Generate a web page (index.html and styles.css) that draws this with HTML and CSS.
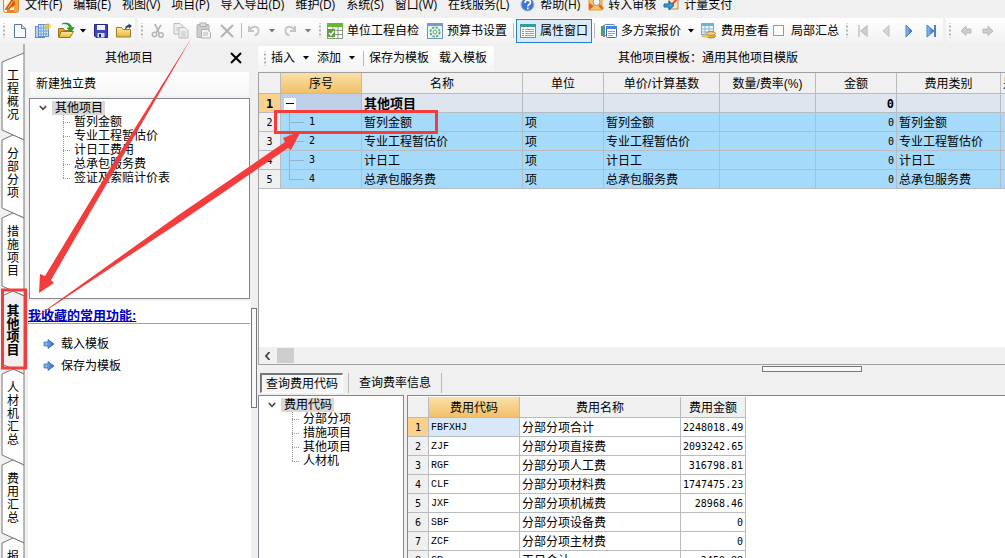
FILE: index.html
```html
<!DOCTYPE html>
<html lang="zh-CN">
<head>
<meta charset="utf-8">
<title>其他项目</title>
<link rel="stylesheet" href="styles.css">
</head>
<body>
<svg class="defs" aria-hidden="true">
  <defs>
    <linearGradient id="gold" x1="0" y1="0" x2="0" y2="1"><stop offset="0" stop-color="#fff0a0"/><stop offset="1" stop-color="#e8b23c"/></linearGradient>
    <linearGradient id="blue" x1="0" y1="0" x2="1" y2="0"><stop offset="0" stop-color="#9cc4f5"/><stop offset="1" stop-color="#2463c8"/></linearGradient>
    <symbol id="arrow-item" viewBox="0 0 12 12"><path d="M1 4h4V1.500L11 6 5 10.500V8H1z" fill="url(#blue)" stroke="#3a68ac" stroke-width=".8"/></symbol>
    <symbol id="caret" viewBox="0 0 6 4"><path d="M0 0h6L3 3.500z" fill="currentColor"/></symbol>
    <symbol id="chevron" viewBox="0 0 8 6"><path d="M.8 1L4 4.300 7.200 1" fill="none" stroke="#444" stroke-width="1.600"/></symbol>
  </defs>
</svg>
<div class="app">
  <nav class="menubar">
    <svg class="icon" viewBox="0 0 16 16"><rect x=".5" y="-2" width="15" height="14.500" rx="2" fill="#fff3d8" stroke="#d98a26"/><path d="M11-1h4v13h-4z" fill="#f7a43a"/><path d="M3 9L9 0l2 2-5 7zM4 11h7M9 7l3-4" stroke="#cf5a14" stroke-width="1.500" fill="#f4b25c"/></svg>
    <button>文件(F)</button><button>编辑(E)</button><button>视图(V)</button><button>项目(P)</button><button>导入导出(D)</button><button>维护(D)</button><button>系统(S)</button><button>窗口(W)</button><button>在线服务(L)</button>
    <button class="with-icon"><svg class="icon" viewBox="0 0 16 16"><circle cx="7.500" cy="5.500" r="6.500" fill="#3d78d8" stroke="#a9b6cc"/><path d="M5 4c0-4 5.500-3.500 5.500-.5 0 2-2.700 2-2.700 4M7.800 8.500v1.700" stroke="#fff" stroke-width="1.600" fill="none"/></svg>帮助(H)</button>
    <button class="with-icon"><svg class="icon" viewBox="0 0 16 16"><path d="M1-1h13v12H1z" fill="#f8c765" stroke="#df9a34"/><path d="M1 4l5 3-5 4z" fill="#e95e1d"/><circle cx="8.500" cy="3" r="3.500" fill="#eef5fb" stroke="#8c9bb0"/><path d="M11 6l4 4" stroke="#d9731c" stroke-width="2.500"/></svg>转入审核</button>
    <button class="with-icon"><svg class="icon" viewBox="0 0 16 16"><path d="M5-1h9v11H5z" fill="#fbe3bc" stroke="#b98b52"/><path d="M15-1L9 6l-2 1 1-3 5-5" fill="#d8402c"/><path d="M0 5h5V2l5 4.500L5 11V8H0z" fill="#319fd8" stroke="#17699c"/></svg>计量支付</button>
  </nav>

  <div class="toolbar">
    <div class="group">
      <span class="grip"></span>
      <button class="tool" aria-label="新建"><svg class="icon" viewBox="0 0 16 16"><path d="M2.500 1.500h7l4 4v9h-11z" fill="#f6faff" stroke="#5d7795"/><path d="M9.500 1.500v4h4" fill="#cddff3" stroke="#5d7795"/></svg></button>
      <button class="tool" aria-label="新建表"><svg class="icon" viewBox="0 0 16 16"><rect x=".5" y="3.500" width="9" height="11" fill="#b9d5f4" stroke="#5f8fc8"/><rect x="3.500" y="1.500" width="10" height="12" fill="#dcebfb" stroke="#5f8fc8"/><path d="M6 2v11M8.500 2v11M11 2v11M4 5h9M4 8h9M4 11h9" stroke="#6da0da"/><path d="M13 0v7M9.500 3.500h6.500M10.500 1l5 5M15.500 1l-5 5" stroke="#f1c638"/></svg></button>
      <button class="tool" aria-label="打开"><svg class="icon" viewBox="0 0 16 16"><path d="M.5 14V5.500h5l1 2h6V14z" fill="#d9a62c" stroke="#96751a"/><path d="M3 8.500h12.500L12 14.500H.8z" fill="url(#gold)" stroke="#96751a"/><path d="M4 1c5-1 7 1 7.500 4H9l4 4 3-4.500h-2.300C13 0 8-1 4 1z" fill="#2ba52d" stroke="#167b1c" stroke-width=".6"/></svg></button>
      <button class="drop" aria-label="打开选项"><svg class="caret"><use href="#caret"/></svg></button>
      <button class="tool" aria-label="保存"><svg class="icon" viewBox="0 0 16 16"><path d="M1.500 1.500h13v13H3l-1.500-1.500z" fill="#3d46bb" stroke="#22277f"/><path d="M4 2h8v5H4z" fill="#eff2fb"/><path d="M4.500 10h7v4.500h-7z" fill="#d9def0"/><path d="M6 11h2v3H6z" fill="#22277f"/></svg></button>
      <button class="tool" aria-label="目录"><svg class="icon" viewBox="0 0 16 16"><path d="M.5 14V4.500h5l1.500 2h7.500V14z" fill="url(#gold)" stroke="#a07c2a"/><path d="M9 7c0-3 1-4.500 3.500-5V.5L16 3l-3 2.700V4.200C11 4.500 10 5.500 9 7z" fill="#37435b"/></svg></button>
    </div>
    <div class="group muted">
      <span class="grip"></span>
      <button class="tool" aria-label="剪切" disabled><svg class="icon" viewBox="0 0 16 16"><path d="M5 1l4 9M11 2L6 10" stroke="#b6b6b6" stroke-width="1.800"/><circle cx="4.500" cy="11.500" r="2.200" fill="none" stroke="#b6b6b6" stroke-width="1.500"/><circle cx="11" cy="12" r="2.200" fill="none" stroke="#b6b6b6" stroke-width="1.500"/></svg></button>
      <button class="tool" aria-label="复制" disabled><svg class="icon" viewBox="0 0 16 16"><path d="M1 .5h6l3 3V11H1z" fill="#eee" stroke="#b9b9b9"/><path d="M6 4.500h6l3 3V15H6z" fill="#eee" stroke="#b9b9b9"/><path d="M3 5h3M3 7h3M8 9h5M8 11h5M8 13h5" stroke="#c2c2c2"/></svg></button>
      <button class="tool" aria-label="粘贴" disabled><svg class="icon" viewBox="0 0 16 16"><rect x="1" y="1.500" width="12" height="13" rx="1" fill="#ccc" stroke="#b1b1b1"/><rect x="4" y="0" width="6" height="3.500" fill="#ddd" stroke="#b1b1b1"/><path d="M5.500 6.500h6l3 3v5.500h-9z" fill="#f3f3f3" stroke="#b1b1b1"/><path d="M7 10h5M7 12h5" stroke="#bbb"/></svg></button>
      <button class="tool" aria-label="删除" disabled><svg class="icon" viewBox="0 0 16 16"><path d="M2 2l12 12M14 2L2 14" stroke="#b3b3b3" stroke-width="2"/></svg></button>
      <span class="sep wide"></span>
      <button class="mini" aria-label="撤销" disabled><svg class="icon" viewBox="0 0 16 16"><path d="M3 3v5h5M3.500 7.500C6 2 13 3 12.500 7.500c0 2.500-2 4.500-4 5" fill="none" stroke="#c5c5c5" stroke-width="2"/></svg></button>
      <button class="mini" aria-label="撤销选项" disabled><svg class="caret"><use href="#caret"/></svg></button>
      <button class="mini" aria-label="重做" disabled><svg class="icon" viewBox="0 0 16 16"><path d="M13 3v5H8M12.500 7.500C10 2 3 3 3.500 7.500c0 2.500 2 4.500 4 5" fill="none" stroke="#c5c5c5" stroke-width="2"/></svg></button>
      <button class="mini" aria-label="重做选项" disabled><svg class="caret"><use href="#caret"/></svg></button>
    </div>
    <div class="group">
      <span class="grip narrow"></span>
      <button class="label"><svg class="icon" viewBox="0 0 16 16"><rect x=".5" y=".5" width="15" height="15" fill="#fff" stroke="#84a37c"/><path d="M0 0h16v4H0z" fill="#65b82e"/><path d="M6 4v12M11 4v12M0 7.500h16M0 11.500h16" stroke="#879488"/><path d="M0 6h8v8H0z" fill="#5e9d42"/><path d="M2 10l2 2 3-4" fill="none" stroke="#fff" stroke-width="1.500"/></svg>单位工程自检</button>
      <button class="label"><svg class="icon" viewBox="0 0 16 16"><rect x=".5" y=".5" width="15" height="15" fill="#eaf5ef" stroke="#6f94be"/><path d="M0 0h16v3H0z" fill="#6f9dd0"/><circle cx="8" cy="9" r="4.600" fill="none" stroke="#58a97c" stroke-width="1.800" stroke-dasharray="2.400 1.200"/><circle cx="8" cy="9" r="2" fill="#fff" stroke="#58a97c"/></svg>预算书设置</button>
      <span class="sep"></span>
      <button class="label pressed" aria-pressed="true"><svg class="icon" viewBox="0 0 16 16"><rect x=".5" y="1.500" width="15" height="13" fill="#fff" stroke="#75909c"/><path d="M0 1h16v3H0z" fill="#319e9a"/><path d="M2 6.500h2M2 8.500h2M2 10.500h2M2 12.500h2" stroke="#d68a39"/><path d="M5 6.500h9M5 8.500h9M5 10.500h9M5 12.500h9" stroke="#8ca5b1"/></svg>属性窗口</button>
      <span class="sep"></span>
      <button class="label"><svg class="icon" viewBox="0 0 16 16"><path d="M0 3h2v10H0z" fill="#47a648"/><path d="M2 2h2v12H2z" fill="#d66a35"/><rect x="3.500" y="1.500" width="10" height="11" rx="1" fill="#fff" stroke="#5b86c8"/><rect x="5.500" y="3.500" width="10" height="11" rx="1" fill="#fff" stroke="#356cc4"/><path d="M5 3h11v3H5z" fill="#4c84db"/><path d="M7 8.500h7M7 10.500h7M7 12.500h5" stroke="#7ea4de"/></svg>多方案报价</button>
      <button class="drop" aria-label="报价选项"><svg class="caret"><use href="#caret"/></svg></button>
      <button class="label"><svg class="icon" viewBox="0 0 16 16"><rect x=".5" y=".5" width="12" height="11" fill="#e9f5fb" stroke="#79a9cc"/><path d="M0 0h13v3H0z" fill="#6ab3dc"/><path d="M4 3v9M8 3v9M1 6h11M1 9h11" stroke="#8dbbd3"/><ellipse cx="10" cy="13" rx="4.500" ry="2" fill="#e6ad47" stroke="#b48b45"/><ellipse cx="10" cy="10.500" rx="4.500" ry="2" fill="#f4cb70" stroke="#b48b45"/><ellipse cx="4" cy="13" rx="3.500" ry="1.500" fill="#f0be5b"/></svg>费用查看</button>
      <label class="check"><input type="checkbox">局部汇总</label>
    </div>
    <div class="group">
      <span class="grip"></span>
      <button class="tool" aria-label="首条" disabled><svg class="icon" viewBox="0 0 16 16"><path d="M4 2v12M12 3v10L6 8z" fill="#d0d0d0" stroke="#c3c3c3" stroke-width="1.500"/></svg></button>
      <button class="tool" aria-label="上一条" disabled><svg class="icon" viewBox="0 0 16 16"><path d="M11 2.500v11L5 8z" fill="#d4d4d4" stroke="#c3c3c3"/></svg></button>
      <button class="tool" aria-label="下一条"><svg class="icon" viewBox="0 0 16 16"><path d="M5 2v12l6-6z" fill="url(#blue)" stroke="#477fd3"/></svg></button>
      <button class="tool" aria-label="末条"><svg class="icon" viewBox="0 0 16 16"><path d="M3 2v12l7-6z" fill="url(#blue)" stroke="#477fd3"/><path d="M11 2v12" stroke="#477fd3" stroke-width="2"/></svg></button>
    </div>
    <div class="group muted last">
      <span class="grip"></span>
      <button class="tool" aria-label="后退" disabled><svg class="icon" viewBox="0 0 16 16"><path d="M13 6H8V3L3 8l5 4.500V10h5z" fill="#ccc" stroke="#bbb"/></svg></button>
      <button class="tool" aria-label="前进" disabled><svg class="icon" viewBox="0 0 16 16"><path d="M2 6h5V3l5 5-5 4.500V10H2z" fill="#ccc" stroke="#bbb"/></svg></button>
    </div>
  </div>

  <div class="workspace">
    <nav class="vtabs">
      <button class="vtab"><svg class="shape" viewBox="0 0 26 78"><path d="M24-13V-4L2 5v68l22 10V-4"/></svg><span>工程概况</span></button>
      <button class="vtab"><svg class="shape" viewBox="0 0 26 78"><path d="M24 5L13 0 2 5v68l22 10z"/></svg><span>分部分项</span></button>
      <button class="vtab"><svg class="shape" viewBox="0 0 26 78"><path d="M24 5L13 0 2 5v68l22 10z"/></svg><span>措施项目</span></button>
      <button class="vtab current"><svg class="shape" viewBox="0 0 26 78"><path d="M24 5L13 0 2 5v68l22 10z"/></svg><span>其他项目</span></button>
      <button class="vtab tall"><svg class="shape" viewBox="0 0 26 91"><path d="M24 5L13 0 2 5v81l22 10z"/></svg><span>人材机汇总</span></button>
      <button class="vtab"><svg class="shape" viewBox="0 0 26 78"><path d="M24 5L13 0 2 5v68l22 10z"/></svg><span>费用汇总</span></button>
      <button class="vtab"><svg class="shape" viewBox="0 0 26 78"><path d="M24 5L13 0 2 5v68l22 10z"/></svg><span>报表输出</span></button>
    </nav>

    <aside class="side">
      <header class="side-title"><h2>其他项目</h2><button class="close" aria-label="关闭"><svg viewBox="0 0 12 12"><path d="M1 1l10 10M11 1L1 11" stroke="#000" stroke-width="2"/></svg></button></header>
      <div class="side-bar"><button>新建独立费</button></div>
      <div class="tree side-tree">
        <div class="root"><svg class="chevron"><use href="#chevron"/></svg><span>其他项目</span></div>
        <ul><li>暂列金额</li><li>专业工程暂估价</li><li>计日工费用</li><li>总承包服务费</li><li>签证及索赔计价表</li></ul>
      </div>
      <section class="favourites">
        <h3><a href="#fav">我收藏的常用功能:</a></h3>
        <button><svg><use href="#arrow-item"/></svg>载入模板</button>
        <button><svg><use href="#arrow-item"/></svg>保存为模板</button>
      </section>
    </aside>
    <div class="splitter-v"><span></span></div>

    <main class="content">
      <div class="grid-bar">
        <div class="grid-tools">
          <span class="grip"></span>
          <button>插入</button><button class="drop" aria-label="插入选项"><svg class="caret"><use href="#caret"/></svg></button>
          <button>添加</button><button class="drop" aria-label="添加选项"><svg class="caret"><use href="#caret"/></svg></button>
          <span class="sep"></span>
          <button class="spaced">保存为模板</button><button class="spaced">载入模板</button>
        </div>
        <p>其他项目模板：通用其他项目模版</p>
      </div>
      <div class="grid-box">
        <table class="grid items">
          <colgroup><col class="c22"><col class="c81"><col class="c161"><col class="c81"><col class="c116"><col class="c96"><col class="c81"><col class="c104"><col></colgroup>
          <thead><tr><th></th><th class="hot">序号</th><th>名称</th><th>单位</th><th>单价/计算基数</th><th>数量/费率(%)</th><th>金额</th><th>费用类别</th><th class="cut">是</th></tr></thead>
          <tbody>
            <tr class="sum"><th class="hot">1</th><td class="tree-cell"><button class="fold" aria-label="折叠"></button></td><td>其他项目</td><td></td><td></td><td></td><td class="num">0</td><td></td><td></td></tr>
            <tr><th>2</th><td class="seq"><span>1</span></td><td>暂列金额</td><td>项</td><td>暂列金额</td><td></td><td class="num">0</td><td>暂列金额</td><td></td></tr>
            <tr><th>3</th><td class="seq"><span>2</span></td><td>专业工程暂估价</td><td>项</td><td>专业工程暂估价</td><td></td><td class="num">0</td><td>专业工程暂估价</td><td></td></tr>
            <tr><th>4</th><td class="seq"><span>3</span></td><td>计日工</td><td>项</td><td>计日工</td><td></td><td class="num">0</td><td>计日工</td><td></td></tr>
            <tr><th>5</th><td class="seq end"><span>4</span></td><td>总承包服务费</td><td>项</td><td>总承包服务费</td><td></td><td class="num">0</td><td>总承包服务费</td><td></td></tr>
          </tbody>
        </table>
        <div class="scroll"><button aria-label="向左滚动"><svg viewBox="0 0 8 8"><path d="M5.500 0L2 4l3.500 4" fill="none" stroke="#444" stroke-width="1.800"/></svg></button><span></span></div>
      </div>
      <div class="splitter-h"><span></span></div>
      <div class="tabs"><button class="on">查询费用代码</button><span class="sep"></span><button>查询费率信息</button><span class="sep"></span></div>
      <div class="lookup">
        <div class="tree code-tree">
          <div class="root"><svg class="chevron"><use href="#chevron"/></svg><span>费用代码</span></div>
          <ul><li>分部分项</li><li>措施项目</li><li>其他项目</li><li>人材机</li></ul>
        </div>
        <div class="code-box">
          <table class="grid codes">
            <colgroup><col class="c21"><col class="c91"><col class="c161"><col class="c65"></colgroup>
            <thead><tr><th></th><th class="hot">费用代码</th><th>费用名称</th><th>费用金额</th></tr></thead>
            <tbody>
              <tr><th class="hot">1</th><td class="code picked">FBFXHJ</td><td>分部分项合计</td><td class="num">2248018.49</td></tr>
              <tr><th>2</th><td class="code">ZJF</td><td>分部分项直接费</td><td class="num">2093242.65</td></tr>
              <tr><th>3</th><td class="code">RGF</td><td>分部分项人工费</td><td class="num">316798.81</td></tr>
              <tr><th>4</th><td class="code">CLF</td><td>分部分项材料费</td><td class="num">1747475.23</td></tr>
              <tr><th>5</th><td class="code">JXF</td><td>分部分项机械费</td><td class="num">28968.46</td></tr>
              <tr><th>6</th><td class="code">SBF</td><td>分部分项设备费</td><td class="num">0</td></tr>
              <tr><th>7</th><td class="code">ZCF</td><td>分部分项主材费</td><td class="num">0</td></tr>
              <tr><th>8</th><td class="code">GR</td><td>工日合计</td><td class="num">2459.88</td></tr>
            </tbody>
          </table>
        </div>
      </div>
    </main>
  </div>
  <svg class="marks" aria-hidden="true">
    <path d="M192 37L120 152 45 276l-5-2-1 19 15-10-3-3L124 154z"/>
    <path d="M29 322L180 214 285 142l-2-4 18-7-10 19-3-2L183 220z"/>
    <rect x="2.500" y="290" width="23" height="78"/>
    <rect x="275.500" y="111.500" width="161" height="21"/>
  </svg>
</div>
</body>
</html>
```
FILE: styles.css
```css
* { box-sizing: border-box; }
body {
  margin: 0;
  overflow: hidden;
  background: #f0f0f0;
  color: #000;
  font: 12px/14px "Liberation Sans", "Noto Sans CJK SC", sans-serif;
}
button {
  margin: 0;
  padding: 0;
  border: 0;
  background: none;
  color: inherit;
  font: inherit;
  white-space: nowrap;
}
h2, h3, p, ul { margin: 0; padding: 0; font-size: 12px; font-weight: normal; }
.defs { position: absolute; width: 0; height: 0; }
.app { position: relative; display: flex; flex-direction: column; height: 100vh; overflow: hidden; }
.icon { display: block; flex: none; width: 16px; height: 16px; overflow: visible; }
.caret { display: block; width: 6px; height: 4px; }

/* menu */
.menubar {
  display: flex;
  flex: none;
  align-items: flex-start;
  gap: 11px;
  height: 18px;
  padding-left: 3px;
  overflow: hidden;
  font-family: "Open Sans", "Noto Sans CJK SC", sans-serif;
}
.menubar button { height: 16px; margin-top: -3px; line-height: 16px; }
.menubar > .icon { margin-right: -5px; }
.menubar .with-icon { display: flex; gap: 4px; margin-right: -3px; }
.menubar .with-icon .icon { margin-top: 2px; }

/* toolbar */
.toolbar { display: flex; flex: none; height: 26px; background: #f0f0f0; }
.group {
  display: flex;
  flex: none;
  align-items: center;
  height: 25px;
  background: linear-gradient(#fff, #f2f2f2);
}
.group.muted { margin-left: 3px; color: #777; }
.group.last { padding-right: 8px; }
.tool, .drop, .mini, .label { display: flex; align-items: center; justify-content: center; height: 24px; }
.tool { width: 23px; }
.drop { width: 12px; }
.mini { width: 18px; color: #777; }
.label { gap: 4px; padding: 0 4px; }
.label.pressed { padding: 0 3px; border: 1px solid #2a80c8; background: #dcebf8; }
.grip {
  width: 8px;
  height: 15px;
  background: radial-gradient(circle, #b4b4b4 1px, transparent 1px) center / 4px 4px repeat-y;
}
.grip.narrow { width: 6px; }
.sep { width: 5px; height: 15px; background: linear-gradient(#b8b8b8, #b8b8b8) center / 1px 100% no-repeat; }
.sep.wide { width: 7px; }
.check { display: flex; align-items: center; gap: 7px; padding-right: 4px; }
.check input { appearance: none; width: 11px; height: 11px; margin: 0; border: 1px solid #999; background: #fff; }

/* vertical tabs */
.workspace { display: flex; flex: 1; min-height: 0; }
.vtabs { flex: none; width: 28px; padding-top: 13px; overflow: hidden; }
.vtab { position: relative; display: flex; align-items: center; justify-content: center; width: 26px; height: 78px; }
.vtab.tall { height: 91px; }
.vtab span { position: relative; width: 12px; line-height: 13px; white-space: normal; word-break: break-all; }
.shape { position: absolute; inset: 0; width: 26px; height: 100%; overflow: visible; }
.shape path { fill: #fff; stroke: #777; }
.vtab.current { font-size: 13px; font-weight: bold; }
.vtab.current span { width: 13px; }
.vtab.current .shape path { fill: #f0f0f0; }

/* side panel */
.side { display: flex; flex: none; flex-direction: column; width: 223px; }
.side-title { display: flex; align-items: center; height: 28px; padding-right: 9px; }
.side-title h2 { flex: 1; padding-left: 0; text-align: center; }
.close { width: 12px; height: 12px; }
.close svg { display: block; }
.side-bar { display: flex; flex: none; align-items: center; height: 24px; margin: 0 2px; padding-left: 6px; background: linear-gradient(#fff, #f6f6f6); }
.tree { overflow: hidden; border: 1px solid #828790; background: #fff; }
.side-tree { flex: none; height: 201px; margin: 2px 1px 2px; padding-top: 2px; }
.root { display: flex; align-items: center; height: 14px; padding-left: 9px; }
.root .chevron { width: 8px; height: 6px; margin-right: 5px; }
.root span { padding: 0 2px 0 3px; background: #d9d9d9; }
.tree ul { list-style: none; }
.tree li { position: relative; height: 14px; padding-left: 44px; white-space: nowrap; }
.tree li::before {
  content: "";
  position: absolute;
  left: 33px;
  top: 0;
  width: 8px;
  height: 14px;
  background:
    repeating-linear-gradient(90deg, #999 0 1px, transparent 1px 2px) 0 7px / 100% 1px no-repeat,
    repeating-linear-gradient(#999 0 1px, transparent 1px 2px) 0 0 / 1px 100% no-repeat;
}
.tree li:last-child::before { height: 8px; }
.favourites { flex: 1; background: #fff; padding-top: 8px; }
.favourites h3 { height: 15px; margin: 0 1px 9px 0; border-bottom: 1px solid #a0a0a0; font-size: 13px; font-weight: bold; }
.favourites a { color: #0000c8; }
.favourites button { display: flex; align-items: center; gap: 6px; height: 22px; padding-left: 15px; }
.favourites svg { width: 12px; height: 12px; }
.splitter-v { flex: none; width: 7px; padding-top: 264px; }
.splitter-v span { display: block; width: 6px; height: 100px; border: 1px solid #777; background: #f8f8f8; }

/* item grid */
.content { display: flex; flex: 1; flex-direction: column; min-width: 0; }
.grid-bar { display: flex; flex: none; align-items: center; height: 28px; }
.grid-tools { display: flex; align-items: center; height: 25px; padding-right: 2px; background: linear-gradient(#fff, #f4f4f4); }
.grid-tools .grip { width: 13px; }
.grid-tools .drop { width: 22px; }
.grid-tools .sep { width: 1px; }
.grid-tools .spaced { padding: 0 5px; }
.grid-bar p { flex: 1; margin-left: 124px; white-space: nowrap; }
.grid-box { display: flex; flex: none; flex-direction: column; height: 293px; overflow: hidden; border: 1px solid #a0a0a0; border-right: 0; background: #fff; }
.grid { border-collapse: separate; border-spacing: 0; table-layout: fixed; }
.items { width: 802px; }
.codes { width: 338px; }
.c21 { width: 21px; } .c22 { width: 22px; } .c65 { width: 65px; } .c81 { width: 81px; } .c91 { width: 91px; }
.c96 { width: 96px; } .c104 { width: 104px; } .c116 { width: 116px; } .c161 { width: 161px; }
.grid th, .grid td {
  height: 19px;
  padding: 1px 2px 0;
  overflow: hidden;
  border: solid #b8bcc0;
  border-width: 0 1px 1px 0;
  line-height: 14px;
  text-align: left;
  white-space: nowrap;
}
.grid th { background: #f0f0f0; font-weight: normal; text-align: center; }
.grid thead th { height: 21px; }
.grid thead .hot { background: linear-gradient(#fae0a8, #f1c068); }
.grid thead .cut { text-align: left; }
.grid tbody th, .grid .num, .grid .seq { font-family: "DejaVu Sans Mono", monospace; font-size: 10px; }
.grid tbody th.hot { background: #fbd28c; }
.grid .num { text-align: right; }
.grid .code { font-family: "Liberation Mono", monospace; font-size: 10px; }
.grid .picked { background: #d8e8f8; }
.items tbody td { background: #a6dafa; }
.items .sum td { background: #dfe5ee; font-size: 13px; font-weight: bold; }
.items .sum .num { font-size: 12px; }
.items .sum .hot { font-size: 12px; font-weight: bold; }
.items .sum .tree-cell { background: #bdd0e8; }
.fold { display: block; width: 12px; height: 12px; margin-left: 1px; background: linear-gradient(#000, #000) center / 8px 1px no-repeat #fff; }
.grid .seq { padding: 0 2px 0 8px; }
.seq span {
  display: block;
  height: 18px;
  padding-left: 20px;
  line-height: 18px;
  background: linear-gradient(#8fb4cc, #8fb4cc) 0 9px / 15px 1px no-repeat, linear-gradient(#8fb4cc, #8fb4cc) 0 0 / 1px 100% no-repeat;
}
.seq.end span { background-size: 15px 1px, 1px 9px; }
.scroll { display: flex; align-items: center; height: 17px; margin-top: auto; background: #f0f0f0; }
.scroll button { width: 18px; height: 17px; padding: 4px 5px; }
.scroll svg { display: block; width: 8px; height: 8px; }
.scroll span { width: 17px; height: 15px; background: #cdcdcd; }

/* lookup pane */
.splitter-h { display: flex; flex: none; justify-content: flex-end; height: 8px; padding: 1px 143px 1px 0; }
.splitter-h span { width: 100px; border: 1px solid #777; background: #f8f8f8; }
.tabs { display: flex; flex: none; align-items: flex-start; height: 22px; padding-left: 2px; }
.tabs button { height: 20px; padding: 0 5px; line-height: 20px; }
.tabs .on { padding: 0 4px; border: solid; border-width: 2px 1px 1px 2px; border-color: #777 #fff #fff #777; line-height: 18px; background: #f6f6f6; }
.tabs .sep { width: 11px; height: 20px; }
.lookup { display: flex; flex: 1; min-height: 0; }
.code-tree { flex: none; width: 146px; padding-top: 2px; border-bottom: 0; }
.code-box { flex: 1; min-width: 0; margin-left: 3px; padding-top: 1px; overflow: hidden; border: solid #828790; border-width: 1px 0 0 1px; background: #fff; }

/* annotations */
.marks { position: absolute; inset: 0; width: 100%; height: 100%; pointer-events: none; }
.marks path { fill: #f43c3c; }
.marks rect { fill: none; stroke: #f43c3c; stroke-width: 3; }
```
